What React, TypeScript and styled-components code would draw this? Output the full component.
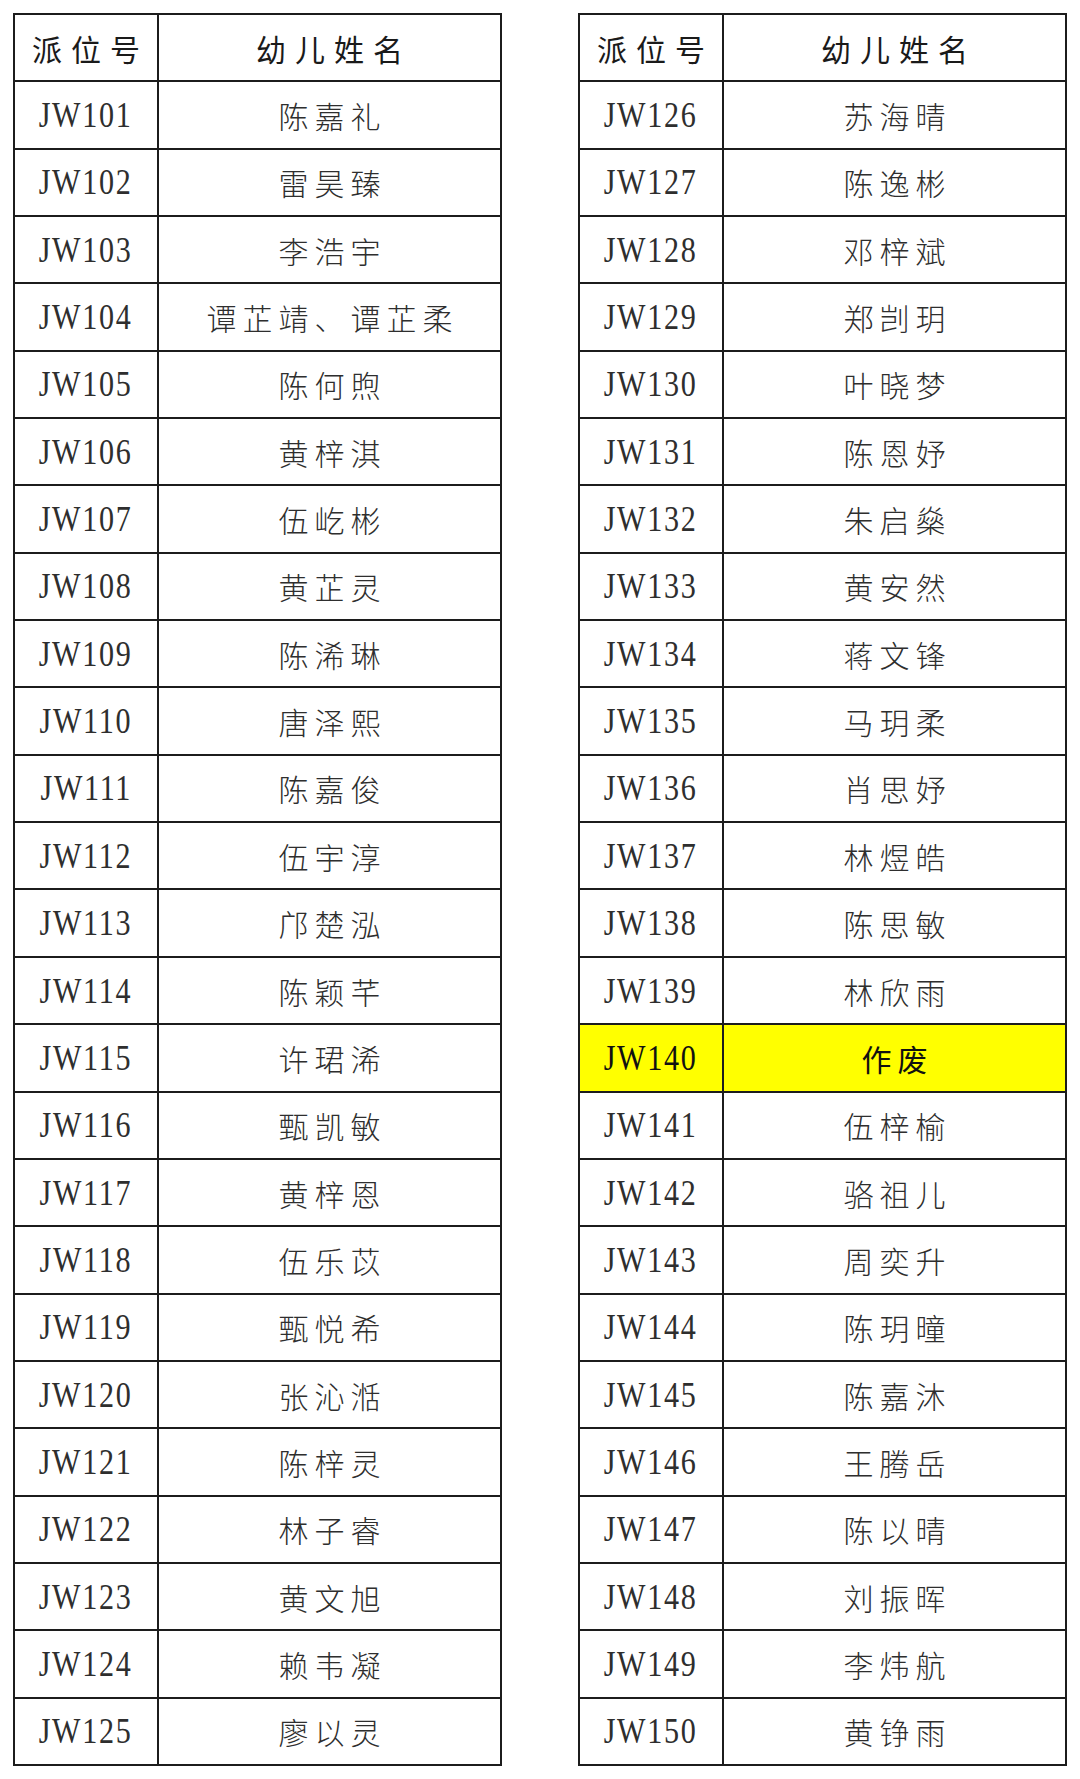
import React from 'react';
import styled, { createGlobalStyle } from 'styled-components';

interface Entry {
  code: string;
  name: string;
  void?: boolean;
}

const LEFT: Entry[] = [
  { code: 'JW101', name: '陈嘉礼' },
  { code: 'JW102', name: '雷昊臻' },
  { code: 'JW103', name: '李浩宇' },
  { code: 'JW104', name: '谭芷靖、谭芷柔' },
  { code: 'JW105', name: '陈何煦' },
  { code: 'JW106', name: '黄梓淇' },
  { code: 'JW107', name: '伍屹彬' },
  { code: 'JW108', name: '黄芷灵' },
  { code: 'JW109', name: '陈浠琳' },
  { code: 'JW110', name: '唐泽熙' },
  { code: 'JW111', name: '陈嘉俊' },
  { code: 'JW112', name: '伍宇淳' },
  { code: 'JW113', name: '邝楚泓' },
  { code: 'JW114', name: '陈颖芊' },
  { code: 'JW115', name: '许珺浠' },
  { code: 'JW116', name: '甄凯敏' },
  { code: 'JW117', name: '黄梓恩' },
  { code: 'JW118', name: '伍乐苡' },
  { code: 'JW119', name: '甄悦希' },
  { code: 'JW120', name: '张沁湉' },
  { code: 'JW121', name: '陈梓灵' },
  { code: 'JW122', name: '林子睿' },
  { code: 'JW123', name: '黄文旭' },
  { code: 'JW124', name: '赖韦凝' },
  { code: 'JW125', name: '廖以灵' },
];

const RIGHT: Entry[] = [
  { code: 'JW126', name: '苏海晴' },
  { code: 'JW127', name: '陈逸彬' },
  { code: 'JW128', name: '邓梓斌' },
  { code: 'JW129', name: '郑剀玥' },
  { code: 'JW130', name: '叶晓梦' },
  { code: 'JW131', name: '陈恩妤' },
  { code: 'JW132', name: '朱启燊' },
  { code: 'JW133', name: '黄安然' },
  { code: 'JW134', name: '蒋文锋' },
  { code: 'JW135', name: '马玥柔' },
  { code: 'JW136', name: '肖思妤' },
  { code: 'JW137', name: '林煜皓' },
  { code: 'JW138', name: '陈思敏' },
  { code: 'JW139', name: '林欣雨' },
  { code: 'JW140', name: '作废', void: true },
  { code: 'JW141', name: '伍梓榆' },
  { code: 'JW142', name: '骆祖儿' },
  { code: 'JW143', name: '周奕升' },
  { code: 'JW144', name: '陈玥曈' },
  { code: 'JW145', name: '陈嘉沐' },
  { code: 'JW146', name: '王腾岳' },
  { code: 'JW147', name: '陈以晴' },
  { code: 'JW148', name: '刘振晖' },
  { code: 'JW149', name: '李炜航' },
  { code: 'JW150', name: '黄铮雨' },
];

function RosterTable({ rows }: { rows: Entry[] }) {
  return (
    <Table>
      <HeadCell>派位号</HeadCell>
      <HeadCell>幼儿姓名</HeadCell>
      {rows.map((row) => (
        <React.Fragment key={row.code}>
          <CodeCell $void={row.void}>
            <CodeText>{row.code}</CodeText>
          </CodeCell>
          <NameCell $void={row.void}>{row.name}</NameCell>
        </React.Fragment>
      ))}
    </Table>
  );
}

export default function App() {
  return (
    <>
      <GlobalStyle />
      <Page>
        <RosterTable rows={LEFT} />
        <RosterTable rows={RIGHT} />
      </Page>
    </>
  );
}

const GlobalStyle = createGlobalStyle`
  html, body {
    margin: 0;
    padding: 0;
    background: #ffffff;
  }
`;

const Page = styled.div`
  box-sizing: border-box;
  width: 1080px;
  height: 1779px;
  padding: 13px;
  display: grid;
  grid-template-columns: 489px 489px;
  column-gap: 76px;
`;

const Table = styled.div`
  display: grid;
  grid-template-columns: 144px 1fr;
  grid-template-rows: repeat(26, 1fr);
  border-top: 2px solid #1c1c1c;
  border-left: 2px solid #1c1c1c;
`;

const Cell = styled.div<{ $void?: boolean }>`
  display: flex;
  align-items: center;
  justify-content: center;
  border-right: 2px solid #1c1c1c;
  border-bottom: 2px solid #1c1c1c;
  background: ${(p) => (p.$void ? '#ffff00' : '#ffffff')};
  color: ${(p) => (p.$void ? '#111111' : '#2e2e2e')};
  white-space: nowrap;
`;

const HeadCell = styled(Cell)`
  font-family: "Noto Sans CJK SC", sans-serif;
  font-size: 30px;
  letter-spacing: 9px;
  padding-left: 9px;
  color: #1a1a1a;
`;

const CodeCell = styled(Cell)`
  font-family: "Liberation Serif", serif;
  font-size: 35px;
`;

const CodeText = styled.span`
  display: inline-block;
  letter-spacing: 2px;
  transform: scaleX(0.86);
  padding-top: 2px;
`;

const NameCell = styled(Cell)`
  font-family: "Noto Sans CJK SC", sans-serif;
  font-size: 30px;
  font-weight: ${(p) => (p.$void ? 400 : 300)};
  letter-spacing: 6px;
  padding-left: 6px;
`;
